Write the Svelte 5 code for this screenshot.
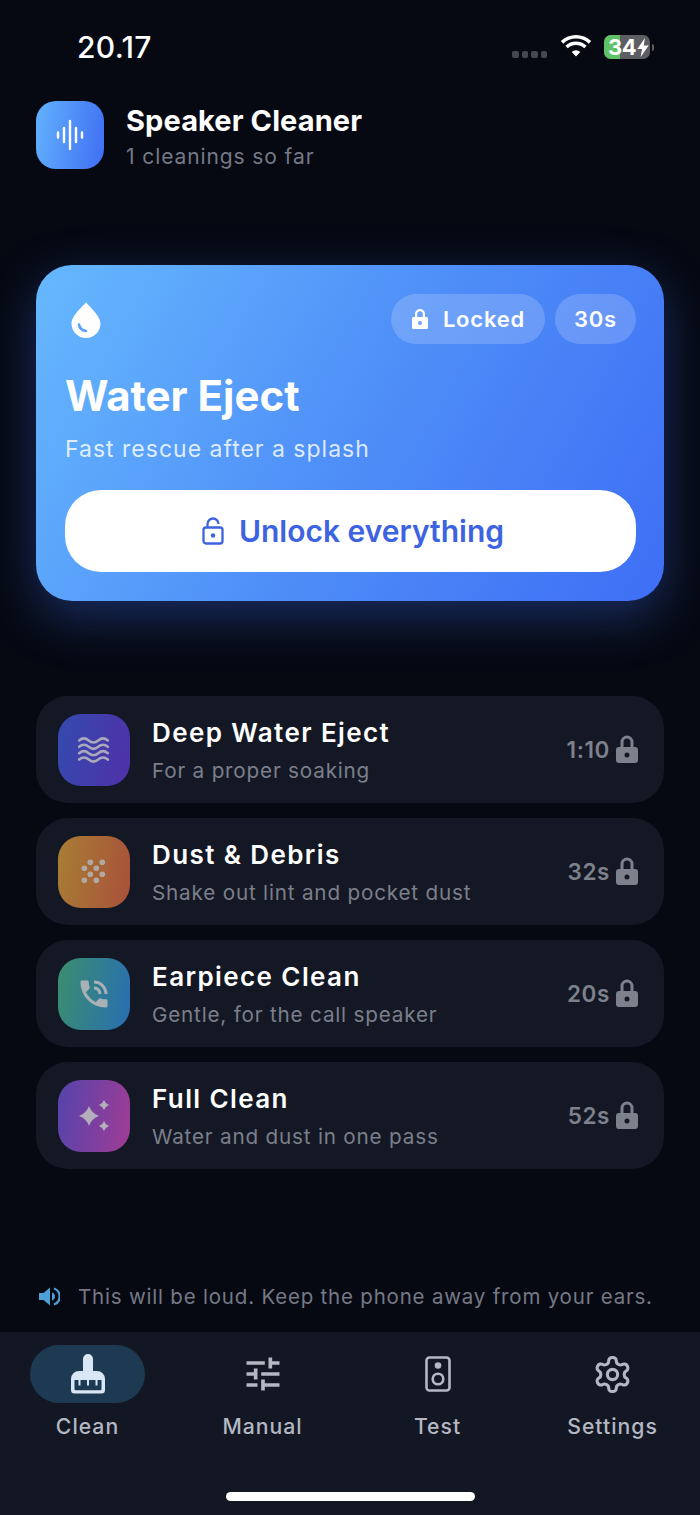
<script>
  const rows = [
    { t: 'Deep Water Eject', s: 'For a proper soaking', d: '1:10', k: 'waves', c: 'g1' },
    { t: 'Dust & Debris', s: 'Shake out lint and pocket dust', d: '32s', k: 'dust', c: 'g2' },
    { t: 'Earpiece Clean', s: 'Gentle, for the call speaker', d: '20s', k: 'phone', c: 'g3' },
    { t: 'Full Clean', s: 'Water and dust in one pass', d: '52s', k: 'spark', c: 'g4' }
  ];
  const wave = (y) => `M2 ${y}c3-2.6 6-2.6 9 0s6 2.600 9 0 6-2.600 9 0`;
  const dots = [[13.3,7.3],[25.3,7.3],[7.3,13.3],[19.3,13.3],[13.3,19.3],[25.3,19.3],[7.3,25.3],[19.3,25.3]];
  const star = (x, y, r) => { const k = r * 0.26; return `M${x} ${y - r}Q${x + k} ${y - k} ${x + r} ${y}Q${x + k} ${y + k} ${x} ${y + r}Q${x - k} ${y + k} ${x - r} ${y}Q${x - k} ${y - k} ${x} ${y - r}Z`; };
  const tabs = ['Clean', 'Manual', 'Test', 'Settings'];
</script>

<div class="page">
  <div class="status">
    <span class="time">20.17</span>
    <div class="sys">
      <div class="cell"><i></i><i></i><i></i><i></i></div>
      <svg class="wifi" viewBox="0 0 32 24" aria-hidden="true"><path d="M16 22.500 11.700 18a6.200 6.200 0 0 1 8.600 0ZM7.800 14.300l-2.500-2.600a15.400 15.400 0 0 1 21.400 0l-2.500 2.600a11.800 11.800 0 0 0-16.400 0ZM3.300 9.700.8 7.100a22 22 0 0 1 30.400 0l-2.500 2.600a18.400 18.400 0 0 0-25.400 0Z" fill="#fff"/></svg>
      <div class="batt"><span class="fill"></span><span class="num">34</span><svg class="bolt" viewBox="0 0 12 20" aria-hidden="true"><path d="M8 0 0 11.500h5L3.500 20 12 8H6.800Z" fill="#fff"/></svg></div>
      <span class="tip"></span>
    </div>
  </div>

  <header class="head">
    <div class="logo">
      <svg viewBox="0 0 28 32" aria-hidden="true"><g stroke="#fff" stroke-width="2.400" stroke-linecap="round"><path d="M2 13.500v5M8 9v14M14 2v28M20 9v14M26 13.500v5"/></g></svg>
    </div>
    <div>
      <div class="app">Speaker Cleaner</div>
      <div class="count">1 cleanings so far</div>
    </div>
  </header>

  <section class="hero">
    <div class="hero-top">
      <svg class="drop" viewBox="0 0 30 36" aria-hidden="true"><path d="M15 .5C13 3 .5 13.500.500 21.500a14.500 14.500 0 0 0 29 0C29.500 13.500 17 3 15 .5Z" fill="#fff"/><path d="M8 22.500c.5 3.500 3 6 7 6.500" fill="none" stroke="#5aa2fa" stroke-width="2.600" stroke-linecap="round"/></svg>
      <div class="chips">
        <span class="chip lockchip">
          <svg viewBox="0 0 18 22" aria-hidden="true"><path fill-rule="evenodd" d="M4 9V6a5 5 0 0 1 10 0v3h1.500A1.500 1.500 0 0 1 17 10.500v9a1.500 1.500 0 0 1-1.500 1.500h-13A1.500 1.500 0 0 1 1 19.500v-9A1.500 1.500 0 0 1 2.500 9ZM6.200 9h5.600V6a2.800 2.800 0 0 0-5.600 0Zm2.800 4a2 2 0 1 0 0 4 2 2 0 0 0 0-4Z" fill="#fff"/></svg>
          Locked
        </span>
        <span class="chip dur">30s</span>
      </div>
    </div>
    <h1>Water Eject</h1>
    <p>Fast rescue after a splash</p>
    <button class="cta">
      <svg viewBox="0 0 22 28" aria-hidden="true"><g fill="none" stroke="#3e63e0" stroke-width="2.300"><rect x="1.500" y="10.500" width="19" height="16" rx="2.500"/><path d="M5.500 10.500V7a5.500 5.500 0 0 1 11 0"/></g><circle cx="11" cy="18.500" r="2.200" fill="#3e63e0"/></svg>
      Unlock everything
    </button>
  </section>

  <div class="list">
    {#each rows as r}
      <div class="row">
        <div class="tile {r.c}">
          {#if r.k === 'waves'}
            <svg class="ic" viewBox="0 0 32 32" aria-hidden="true"><g fill="none" stroke="#aaa9bc" stroke-width="2.400" stroke-linecap="round"><path d={wave(7)}/><path d={wave(13)}/><path d={wave(19)}/><path d={wave(25)}/></g></svg>
          {:else if r.k === 'dust'}
            <svg class="ic" viewBox="0 0 34 34" aria-hidden="true"><g fill="#b0aaa5">{#each dots as p}<circle cx={p[0]} cy={p[1]} r="2.800"/>{/each}</g></svg>
          {:else if r.k === 'phone'}
            <svg class="ic phone" viewBox="0 0 24 24" aria-hidden="true"><path d="M20 15.500c-1.250 0-2.450-.2-3.570-.57-.35-.11-.74-.03-1.020.24l-2.200 2.200c-2.830-1.440-5.150-3.750-6.590-6.590l2.200-2.210c.28-.26.36-.65.25-1C8.700 6.450 8.500 5.250 8.500 4c0-.55-.45-1-1-1H4c-.55 0-1 .45-1 1 0 9.390 7.610 17 17 17 .55 0 1-.45 1-1v-3.500c0-.55-.45-1-1-1ZM19 12h2c0-4.970-4.030-9-9-9v2c3.870 0 7 3.130 7 7Zm-4 0h2c0-2.760-2.240-5-5-5v2c1.660 0 3 1.340 3 3Z" fill="#a9b1b6"/></svg>
          {:else}
            <svg class="ic" viewBox="0 0 34 34" aria-hidden="true"><g fill="#b4aebc"><path d={star(12, 17, 10)}/><path d={star(27, 6, 5)}/><path d={star(27, 27, 5)}/></g></svg>
          {/if}
        </div>
        <div class="txt">
          <div class="rt">{r.t}</div>
          <div class="rs">{r.s}</div>
        </div>
        <div class="meta">
          <span>{r.d}</span>
          <svg viewBox="0 0 22 28" aria-hidden="true"><path fill-rule="evenodd" d="M4.500 12V7a6.500 6.500 0 0 1 13 0v5h1.500A3 3 0 0 1 22 15v10a3 3 0 0 1-3 3H3a3 3 0 0 1-3-3V15a3 3 0 0 1 3-3Zm3 0h7V7a3.500 3.500 0 0 0-7 0ZM11 17.500a2.500 2.500 0 1 0 0 5 2.500 2.500 0 0 0 0-5Z" fill="#7d818c"/></svg>
        </div>
      </div>
    {/each}
  </div>

  <div class="note">
    <svg viewBox="0 0 21 19" aria-hidden="true"><path d="M0 6h4.500L11 .5v18L4.500 13H0Z" fill="#4d9fd6"/><path d="M13 5.500a4.200 4.200 0 0 1 0 8Z" fill="#4d9fd6"/><path d="M15 1.500a8.500 8.500 0 0 1 0 16" fill="none" stroke="#4d9fd6" stroke-width="2.300"/></svg>
    <span>This will be loud. Keep the phone away from your ears.</span>
  </div>

  <nav class="tabs">
    {#each tabs as t, i}
      <div class="tab">
        <div class="icwrap" class:on={i === 0}>
          {#if i === 0}
            <svg class="broom" viewBox="0 0 34 40" aria-hidden="true"><path fill-rule="evenodd" d="M12 5a5 5 0 0 1 10 0v12h4a8 8 0 0 1 8 8v11a3.500 3.500 0 0 1-3.500 3.500h-27A3.500 3.500 0 0 1 0 36V25a8 8 0 0 1 8-8h4ZM3.500 26v9.500a.8.8 0 0 0 .8.800h25.400a.8.8 0 0 0 .8-.8V26h-4v5.500h-2V26h-6.500v5.500h-2V26H9.500v5.500h-2V26Z" fill="#d8e6f5"/></svg>
          {:else if i === 1}
            <svg class="tune" viewBox="0 0 24 24" aria-hidden="true"><path d="M3 17v2h6v-2H3ZM3 5v2h10V5H3Zm10 16v-2h8v-2h-8v-2h-2v6h2ZM7 9v2H3v2h4v2h2V9H7Zm14 4v-2H11v2h10Zm-6-4h2V7h4V5h-4V3h-2v6Z" fill="#b4b8c2"/></svg>
          {:else if i === 2}
            <svg class="spk" viewBox="0 0 26 36" aria-hidden="true"><rect x="1.500" y="1.500" width="23" height="33" rx="3" fill="none" stroke="#b4b8c2" stroke-width="2.600"/><circle cx="13" cy="9.500" r="3.300" fill="#b4b8c2"/><circle cx="13" cy="23" r="5.300" fill="none" stroke="#b4b8c2" stroke-width="2.600"/></svg>
          {:else}
            <svg class="gear" viewBox="0 0 24 24" aria-hidden="true"><g fill="none" stroke="#b4b8c2" stroke-width="1.800"><path d="M12.220 2h-.44a2 2 0 0 0-2 2v.18a2 2 0 0 1-1 1.730l-.43.25a2 2 0 0 1-2 0l-.15-.08a2 2 0 0 0-2.730.73l-.22.38a2 2 0 0 0 .73 2.730l.15.1a2 2 0 0 1 1 1.720v.51a2 2 0 0 1-1 1.740l-.15.09a2 2 0 0 0-.73 2.730l.22.38a2 2 0 0 0 2.730.73l.15-.08a2 2 0 0 1 2 0l.43.25a2 2 0 0 1 1 1.730V20a2 2 0 0 0 2 2h.44a2 2 0 0 0 2-2v-.18a2 2 0 0 1 1-1.730l.43-.25a2 2 0 0 1 2 0l.15.08a2 2 0 0 0 2.730-.73l.22-.39a2 2 0 0 0-.73-2.730l-.15-.08a2 2 0 0 1-1-1.740v-.5a2 2 0 0 1 1-1.740l.15-.09a2 2 0 0 0 .73-2.730l-.22-.38a2 2 0 0 0-2.730-.73l-.15.08a2 2 0 0 1-2 0l-.43-.25a2 2 0 0 1-1-1.730V4a2 2 0 0 0-2-2Z"/><circle cx="12" cy="12" r="3"/></g></svg>
          {/if}
        </div>
        <span class="lab">{t}</span>
      </div>
    {/each}
    <div class="home"></div>
  </nav>
</div>

<style>
  :global(body) { margin: 0; background: #060912; }
  .page {
    width: 700px; height: 1515px; overflow: hidden; box-sizing: border-box;
    background: #060912; color: #fff; font-family: Inter, "Liberation Sans", sans-serif;
    display: flex; flex-direction: column;
  }
  .status { height: 94px; flex: none; display: flex; justify-content: space-between; padding: 30px 0 0 78px; box-sizing: border-box; }
  .time { font-size: 30px; font-weight: 500; line-height: 34px; letter-spacing: 0.3px; margin-left: -1px; }
  .sys { display: flex; align-items: flex-start; padding-right: 50px; position: relative; }
  .cell { display: flex; gap: 3px; margin-top: 21px; margin-right: 13px; }
  .cell i { width: 6.500px; height: 6.500px; border-radius: 2px; background: #454850; }
  .wifi { width: 32px; height: 24px; margin-top: 4px; margin-right: 12px; }
  .batt { position: relative; width: 46px; height: 24px; border-radius: 7px; background: #5c5e64; overflow: hidden; margin-top: 5px; display: flex; align-items: center; }
  .fill { position: absolute; inset: 0 30px 0 0; background: #5fc266; }
  .num { position: relative; font-size: 22px; font-weight: 700; line-height: 24px; padding-left: 4px; letter-spacing: -0.5px; }
  .bolt { position: relative; width: 12px; height: 19px; margin-left: 1px; }
  .tip { position: absolute; right: 50px; transform: translateX(4px); top: 14px; width: 2px; height: 7px; border-radius: 0 2px 2px 0; background: #5c5e64; }

  .head { display: flex; align-items: flex-start; gap: 22px; padding: 7px 36px 0; height: 68px; flex: none; }
  .logo { width: 68px; height: 68px; border-radius: 20px; background: linear-gradient(100deg, #62b2fd, #3f6ef3); display: flex; align-items: center; justify-content: center; flex: none; }
  .logo svg { width: 28px; height: 32px; }
  .app { font-size: 29px; font-weight: 700; line-height: 36px; letter-spacing: 0.1px; padding-top: 2px; }
  .count { font-size: 21px; line-height: 30px; color: #757986; margin-top: 3px; letter-spacing: 0.9px; }

  .hero {
    margin: 96px 36px 0; height: 336px; box-sizing: border-box; padding: 29px 28px 0 29px;
    border-radius: 36px; background: linear-gradient(120deg, #66b8fe 0%, #4f8ff8 50%, #3e6ef5 100%);
    box-shadow: 0 16px 50px rgba(60, 110, 240, 0.36); flex: none;
  }
  .hero-top { display: flex; justify-content: space-between; align-items: flex-start; height: 50px; }
  .drop { width: 30px; height: 36px; margin: 8px 0 0 6px; }
  .chips { display: flex; gap: 10px; }
  .chip { height: 50px; border-radius: 25px; background: rgba(255,255,255,0.18); display: flex; align-items: center; font-size: 22px; font-weight: 600; letter-spacing: 0.8px; padding-bottom: 1px; box-sizing: border-box; }
  .lockchip { width: 154px; justify-content: center; gap: 14px; }
  .lockchip svg { width: 18px; height: 22px; }
  .dur { width: 81px; justify-content: center; }
  h1 { margin: 28px 0 0; font-size: 42px; font-weight: 700; line-height: 48px; letter-spacing: 0; }
  p { margin: 14px 0 0; font-size: 23px; line-height: 30px; font-weight: 400; letter-spacing: 1px; color: rgba(255,255,255,0.82); }
  .cta {
    margin-top: 26px; width: 571px; height: 82px; border: 0; border-radius: 36px; background: #fff; color: #3e63e0;
    font-family: inherit; font-size: 30px; font-weight: 600; display: flex; align-items: center; justify-content: center; gap: 15px; padding: 0 0 0 5px;
  }
  .cta svg { width: 22px; height: 28px; }

  .list { margin: 95px 36px 0; display: flex; flex-direction: column; gap: 15px; }
  .row { height: 107px; border-radius: 32px; background: #141824; display: flex; align-items: center; padding: 0 26px 0 22px; box-sizing: border-box; flex: none; }
  .tile { width: 72px; height: 72px; border-radius: 23px; display: flex; align-items: center; justify-content: center; flex: none; }
  .g1 { background: linear-gradient(100deg, #344aaf, #5030a8); }
  .g2 { background: linear-gradient(100deg, #a87e34, #a8503a); }
  .g3 { background: linear-gradient(100deg, #3c8e6e, #286eb2); }
  .g4 { background: linear-gradient(100deg, #5444ac, #a03c94); }
  .ic { width: 34px; height: 34px; }
  .ic.phone { width: 36px; height: 36px; }
  .txt { margin-left: 22px; flex: 1; padding-top: 2px; }
  .rt { font-size: 26px; font-weight: 600; line-height: 34px; letter-spacing: 1.400px; }
  .rs { font-size: 20.700px; line-height: 28px; margin-top: 7px; color: #7b7f8b; letter-spacing: 0.800px; }
  .meta { display: flex; align-items: center; gap: 6px; color: #7d818c; font-size: 22.500px; font-weight: 600; letter-spacing: 0.6px; }
  .meta svg { width: 22px; height: 28px; margin-top: -2px; }

  .note { margin: 112px 0 0 39px; display: flex; align-items: center; gap: 18px; height: 30px; font-size: 20.500px; color: #757986; letter-spacing: 0.800px; white-space: nowrap; }
  .note svg { width: 21px; height: 19px; flex: none; }

  .tabs { margin-top: 21px; flex: 1; background: #121723; display: grid; grid-template-columns: repeat(4, 175px); align-content: start; padding-top: 13px; position: relative; }
  .tab { display: flex; flex-direction: column; align-items: center; }
  .icwrap { width: 115px; height: 58px; border-radius: 29px; display: flex; align-items: center; justify-content: center; }
  .icwrap.on { background: #1e3a52; }
  .broom { width: 34px; height: 40px; }
  .tune { width: 44px; height: 44px; }
  .spk { width: 26px; height: 36px; }
  .gear { width: 41px; height: 41px; }
  .lab { margin-top: 8px; font-size: 21.200px; line-height: 30px; font-weight: 500; color: #b4b8c2; letter-spacing: 1px; }
  .home { position: absolute; left: 226px; top: 160px; width: 249px; height: 9px; border-radius: 5px; background: #fff; }
</style>
